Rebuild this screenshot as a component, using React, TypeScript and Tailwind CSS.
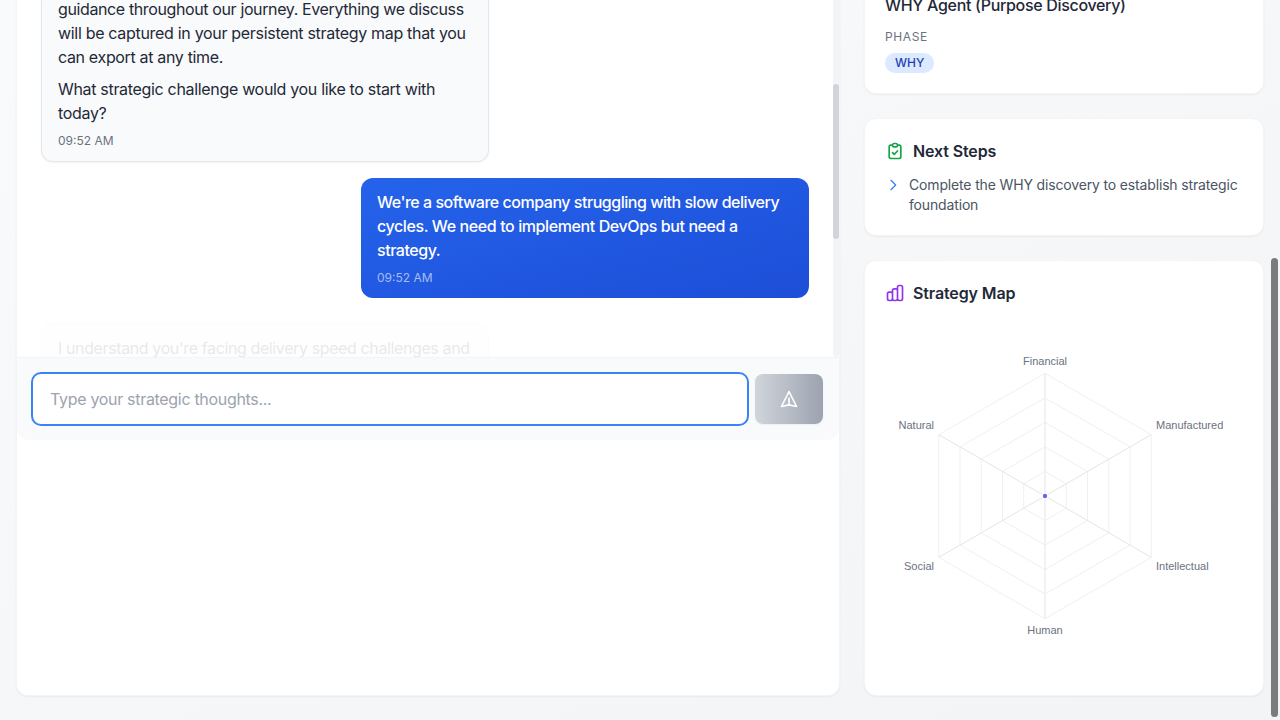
import type { ReactNode } from "react";

function Icon({ d, className }: { d: string; className: string }) {
  return (
    <svg className={className} viewBox="0 0 24 24" fill="none" stroke="currentColor" strokeWidth={2} strokeLinecap="round" strokeLinejoin="round">
      <path d={d} />
    </svg>
  );
}

const icons = {
  send: "M12 19l9 2-9-18-9 18 9-2zm0 0v-8",
  clipboard:
    "M9 5H7a2 2 0 00-2 2v12a2 2 0 002 2h10a2 2 0 002-2V7a2 2 0 00-2-2h-2M9 5a2 2 0 002 2h2a2 2 0 002-2M9 5a2 2 0 012-2h2a2 2 0 012 2m-6 9l2 2 4-4",
  chart:
    "M9 19v-6a2 2 0 00-2-2H5a2 2 0 00-2 2v6a2 2 0 002 2h2a2 2 0 002-2zm0 0V9a2 2 0 012-2h2a2 2 0 012 2v10m-6 0a2 2 0 002 2h2a2 2 0 002-2m0 0V5a2 2 0 012-2h2a2 2 0 012 2v14a2 2 0 01-2 2h-2a2 2 0 01-2-2z",
  chevron: "M9 5l7 7-7 7",
};

function Line({ children, className = "" }: { children: ReactNode; className?: string }) {
  return <span className={`block whitespace-nowrap ${className}`}>{children}</span>;
}

function Chat() {
  return (
    <section className="flex h-[696px] w-[824px] flex-col overflow-hidden rounded-b-xl border border-t-0 border-[#f3f4f6] bg-white shadow-xs">
      <div className="flex h-[357px]">
        <div className="flex flex-1 flex-col overflow-hidden pr-6 pl-6">
          <div className="flex h-[162px] w-[448px] shrink-0 flex-col justify-end rounded-b-xl border border-t-0 border-[#e5e7eb] bg-[#f9fafb] px-4 pb-3 text-base text-[#1f2937] shadow-xs">
            <p className="mb-2">
              <Line className="tracking-[-0.38px]">guidance throughout our journey. Everything we discuss</Line>
              <Line className="tracking-[-0.31px]">will be captured in your persistent strategy map that you</Line>
              <Line className="tracking-[-0.34px]">can export at any time.</Line>
            </p>
            <p>
              <Line className="tracking-[-0.32px]">What strategic challenge would you like to start with</Line>
              <Line className="tracking-[-0.33px]">today?</Line>
            </p>
            <time className="mt-2 text-xs text-[#6b7280]">09:52 AM</time>
          </div>
          <div className="mt-4 flex h-[120px] w-[448px] shrink-0 flex-col self-end rounded-xl bg-[linear-gradient(to_bottom_right,#2563eb,#1d4ed8)] px-4 py-3 text-base text-white">
            <p className="font-[450]">
              <Line className="tracking-[-0.475px]">We're a software company struggling with slow delivery</Line>
              <Line className="tracking-[-0.4px]">cycles. We need to implement DevOps but need a</Line>
              <Line className="tracking-[-0.45px]">strategy.</Line>
            </p>
            <time className="mt-2 text-xs text-white/60">09:52 AM</time>
          </div>
          <div className="mt-[25px] h-20 w-[448px] shrink-0 rounded-xl border border-[#e5e7eb] bg-[#f9fafb] px-4 py-3 text-base text-[#1f2937] opacity-10">
            <Line className="tracking-[-0.385px]">I understand you're facing delivery speed challenges and</Line>
          </div>
        </div>
        <div className="w-1.5 rounded-b bg-[#f3f4f6] pt-[84px]">
          <div className="h-[155px] rounded-full bg-[#d1d5db]" />
        </div>
      </div>
      <div className="flex h-[83px] items-center gap-1.5 rounded-b-xl border-t border-[#f3f4f6] bg-[#f9fafb] pr-4 pl-3.5">
        <div className="flex h-[54px] flex-1 items-center rounded-[10px] border-2 border-[#3b82f6] bg-white px-[17px] text-base tracking-[-0.31px] text-[#9ca3af]">
          Type your strategic thoughts...
        </div>
        <div className="flex h-[50px] w-[68px] items-center justify-center rounded-lg bg-[linear-gradient(to_right,#d1d5db,#9ca3af)] text-white shadow-xs">
          <Icon d={icons.send} className="size-5" />
        </div>
      </div>
    </section>
  );
}

const angles = [-90, -30, 30, 90, 150, 210];
const radius = 122.7;
const point = (r: number, a: number) => [160 + r * Math.cos((a * Math.PI) / 180), 191 + r * Math.sin((a * Math.PI) / 180)];

function Radar() {
  return (
    <svg className="h-[370px] w-[358px]" viewBox="0 0 358 370" fontFamily="Liberation Sans, sans-serif" fontSize="11">
      <g fill="none" stroke="#f0f0f0" strokeWidth="1">
        {[0.2, 0.4, 0.6, 0.8, 1].map((k) => (
          <polygon key={k} points={angles.map((a) => point(radius * k, a).join(",")).join(" ")} />
        ))}
      </g>
      <g stroke="#e5e5e5" strokeWidth="1">
        {angles.map((a) => {
          const [x, y] = point(radius, a);
          return <line key={a} x1="160" y1="191" x2={x} y2={y} />;
        })}
      </g>
      <circle cx="160" cy="191" r="3.5" fill="#ffffff" />
      <circle cx="160" cy="191" r="2.2" fill="#6366f1" />
      <g fill="#6b7280">
        <text x="160" y="60" textAnchor="middle">Financial</text>
        <text x="271" y="124">Manufactured</text>
        <text x="271" y="265">Intellectual</text>
        <text x="160" y="329" textAnchor="middle">Human</text>
        <text x="49" y="265" textAnchor="end">Social</text>
        <text x="49" y="124" textAnchor="end">Natural</text>
      </g>
    </svg>
  );
}

function Sidebar() {
  return (
    <aside className="flex w-[400px] flex-col gap-6">
      <section className="flex h-[94px] flex-col items-start justify-end overflow-hidden rounded-b-xl border border-t-0 border-[#f3f4f6] bg-white px-5 pb-5 shadow-xs">
        <h3 className="mb-3 text-base font-medium tracking-[-0.32px] text-[#1f2937]">WHY Agent (Purpose Discovery)</h3>
        <p className="mb-2 text-xs tracking-[0.6px] text-[#6b7280]">PHASE</p>
        <span className="rounded-full bg-[#dbeafe] px-2.5 py-0.5 text-xs font-medium text-[#1e40af]">WHY</span>
      </section>
      <section className="h-[118px] rounded-xl border border-[#f3f4f6] bg-white p-5 shadow-xs">
        <h2 className="mb-3 flex items-center gap-2 text-base font-semibold tracking-[-0.12px] text-[#1f2937]">
          <Icon d={icons.clipboard} className="size-5 text-[#16a34a]" />
          Next Steps
        </h2>
        <div className="flex gap-2 text-sm tracking-[-0.155px] text-[#4b5563]">
          <Icon d={icons.chevron} className="mt-0.5 size-4 shrink-0 text-[#3b82f6]" />
          <p>
            <Line>Complete the WHY discovery to establish strategic</Line>
            <Line>foundation</Line>
          </p>
        </div>
      </section>
      <section className="h-[436px] rounded-xl border border-[#f3f4f6] bg-white p-5 shadow-xs">
        <h2 className="flex items-center gap-2 text-base font-semibold tracking-[-0.12px] text-[#1f2937]">
          <Icon d={icons.chart} className="size-5 text-[#9333ea]" />
          Strategy Map
        </h2>
        <Radar />
      </section>
    </aside>
  );
}

export default function App() {
  return (
    <div className="relative flex h-[720px] w-[1280px] gap-6 overflow-hidden bg-[linear-gradient(to_bottom_right,#f9fafb,#f3f4f6)] px-4 font-['Inter',sans-serif] antialiased">
      <Chat />
      <Sidebar />
      <div className="absolute top-[258px] right-[2px] h-[459px] w-[7px] rounded-full bg-[#7b7b7c]" />
    </div>
  );
}
